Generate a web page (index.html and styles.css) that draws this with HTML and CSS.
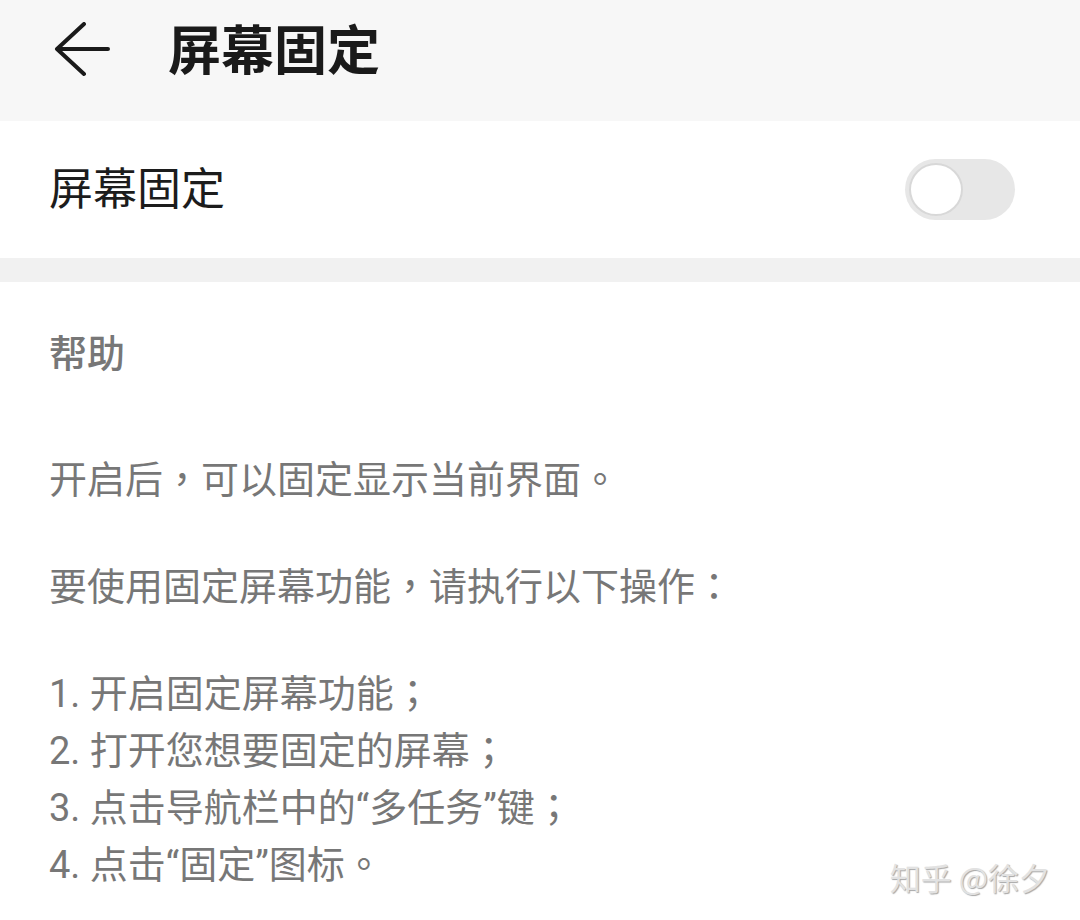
FILE: index.html
```html
<!DOCTYPE html>
<html>
    <head>
        <title>屏幕固定</title>
        <link rel="stylesheet" href="styles.css">
    </head>
<body>
    <div class="page">
        <div class="header">
            <svg class="back" width="60" height="60" viewBox="0 0 60 60">
                <path d="M32 2 L5 27 L32 52 M5 27 L56 27" fill="none" stroke="#1a1a1a" stroke-width="4" stroke-linecap="round" stroke-linejoin="round"/>
            </svg>
            <div class="title">屏幕固定</div>
        </div>

        <div class="setting-row">
            <span class="label">屏幕固定</span>
            <div class="switch"><div class="knob"></div></div>
        </div>

        <div class="gap-band"></div>

        <div class="help">
            <div class="help-title">帮助</div>
            <p>开启后<span class="pc">，</span>可以固定显示当前界面<span class="pc">。</span></p>
            <p>要使用固定屏幕功能<span class="pc">，</span>请执行以下操作<span class="pc">：</span></p>
            <p>
                1. 开启固定屏幕功能<span class="pc">；</span><br>
                2. 打开您想要固定的屏幕<span class="pc">；</span><br>
                3. 点击导航栏中的“多任务”键<span class="pc">；</span><br>
                4. 点击“固定”图标<span class="pc">。</span>
            </p>
        </div>

        <div class="watermark">知乎 @徐夕</div>
    </div>
</body>
</html>
```

FILE: styles.css
```css
* {
    padding: 0;
    margin: 0;
    box-sizing: border-box
}

body {
    background-color: #fff;
    font-family: Roboto, "Noto Sans CJK SC", sans-serif;
}

.page {
    position: relative;
    width: 1080px;
    height: 920px;
    overflow: hidden
}

.header {
    height: 121px;
    background-color: #f7f7f7;
    display: flex;
    align-items: center;
    padding-left: 52px;
    padding-bottom: 17px
}

.header .back {
    margin-right: 56px
}

.header .title {
    font-size: 53px;
    font-weight: 700;
    line-height: 1;
    color: #1a1a1a
}

.setting-row {
    height: 137px;
    display: flex;
    align-items: center;
    justify-content: space-between;
    padding-left: 49px;
    padding-right: 65px
}

.setting-row .label {
    font-size: 44px;
    line-height: 1;
    color: #1c1c1c
}

.switch {
    width: 110px;
    height: 61px;
    border-radius: 31px;
    background-color: #e7e7e7;
    padding: 4px
}

.switch .knob {
    width: 54px;
    height: 53px;
    border-radius: 50%;
    background-color: #fff;
    border: 2px solid #d8d8d8
}

.gap-band {
    height: 24px;
    background-color: #f1f1f1
}

.help {
    padding: 44px 49px 0;
    font-size: 38px;
    line-height: 57px;
    color: #777
}

.help .help-title {
    font-weight: 500;
    margin-bottom: 69px
}

.help p {
    margin-bottom: 50px
}

/* centred full-width punctuation, as on the phone */
.pc {
    font-family: "Noto Sans CJK TC", sans-serif;
    line-height: 1
}

.watermark {
    position: absolute;
    right: 30px;
    bottom: 28px;
    font-family: "Noto Sans CJK SC", sans-serif;
    font-size: 31px;
    line-height: 1;
    color: #e2e2e2;
    text-shadow: 1px 1px 1px rgba(0, 0, 0, 0.35)
}
```
